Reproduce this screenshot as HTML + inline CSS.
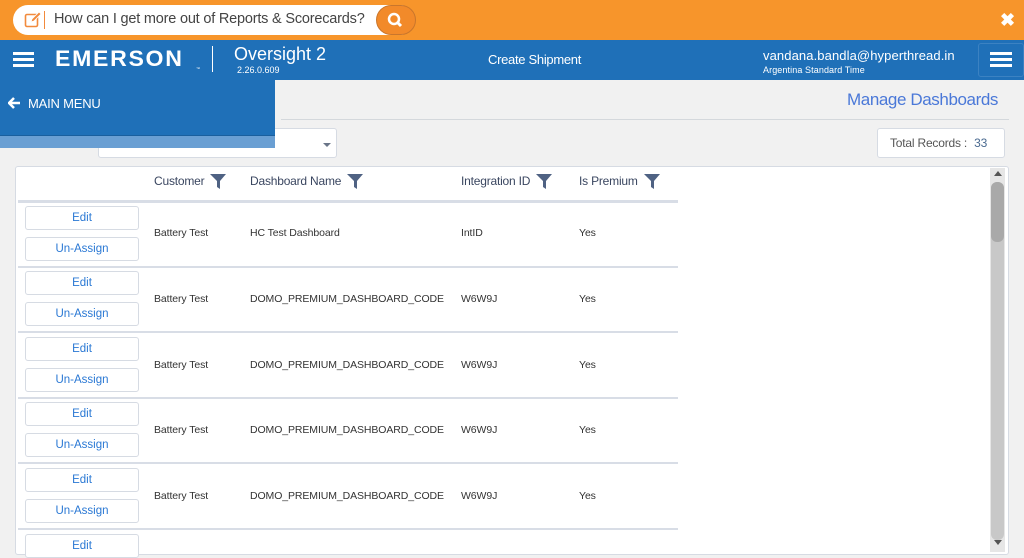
<!DOCTYPE html><html><head><style>
*{box-sizing:border-box;margin:0;padding:0}
body{width:1024px;height:555px;overflow:hidden;background:#f1f1f1;font-family:"Liberation Sans",sans-serif;position:relative}
.abs{position:absolute;white-space:nowrap}
.btn{position:absolute;left:25px;width:114px;height:24px;border:1px solid #d6dbe3;border-radius:3px;background:#fff;color:#2a78d4;font-size:11.5px;text-align:center;line-height:22px}
.cell{position:absolute;font-size:10.5px;color:#333;letter-spacing:-0.1px;white-space:nowrap}
.hd{position:absolute;top:174px;font-size:12px;color:#3a4660;letter-spacing:-0.2px;white-space:nowrap}
.hd svg{vertical-align:middle;margin-left:6px;position:relative;top:-1px}
.line{position:absolute;left:18px;width:660px;height:2px;background:#d8dde6}
</style></head><body>
<div class="abs" style="left:0;top:0;width:1024px;height:40px;background:#f7952b"></div>
<div class="abs" style="left:13px;top:5px;width:402px;height:30px;border-radius:15px;background:#fff"></div>
<svg class="abs" style="left:24px;top:11px" width="18" height="18"><rect x="1.5" y="3.5" width="12" height="12" rx="1.5" fill="none" stroke="#f28a3c" stroke-width="1.6"/><path d="M7 11 L8 8 L15 1 L17 3 L10 10 Z" fill="#f28a3c" stroke="#fff" stroke-width="0.8"/></svg>
<div class="abs" style="left:44px;top:11px;width:1px;height:18px;background:#f28a3c"></div>
<div class="abs" style="left:54px;top:11px;font-size:14.5px;color:#444;letter-spacing:-0.2px">How can I get more out of Reports &amp; Scorecards?</div>
<div class="abs" style="left:376px;top:5px;width:40px;height:30px;border-radius:15px;background:#f28a2a;border:1px solid #c9762c"></div>
<svg class="abs" style="left:386px;top:11px" width="18" height="18"><circle cx="8" cy="8" r="5" stroke="#fff" stroke-width="2.5" fill="none"/><line x1="11.5" y1="11.5" x2="15" y2="15" stroke="#fff" stroke-width="3"/></svg>
<div class="abs" style="left:1000px;top:10px;color:#fff;font-size:18px;font-weight:bold">✖</div>
<div class="abs" style="left:0;top:40px;width:1024px;height:40px;background:#1f70b8"></div>
<div class="abs" style="left:13px;top:52px;width:21px;height:3px;background:#fff;box-shadow:0 6px 0 #fff,0 12px 0 #fff"></div>
<div class="abs" style="left:55px;top:46px;color:#fff;font-size:22px;font-weight:bold;letter-spacing:1.6px;transform:scaleX(1.05);transform-origin:left">EMERSON</div>
<div class="abs" style="left:196px;top:66px;color:#fff;font-size:4px">™</div>
<div class="abs" style="left:212px;top:46px;width:1px;height:26px;background:#fff"></div>
<div class="abs" style="left:234px;top:44px;color:#fff;font-size:18px">Oversight 2</div>
<div class="abs" style="left:237px;top:65px;color:#fff;font-size:9px">2.26.0.609</div>
<div class="abs" style="left:488px;top:52px;color:#fff;font-size:13px;letter-spacing:-0.3px">Create Shipment</div>
<div class="abs" style="left:763px;top:48px;color:#fff;font-size:13px;letter-spacing:0.1px">vandana.bandla@hyperthread.in</div>
<div class="abs" style="left:763px;top:65px;color:#fff;font-size:9px;letter-spacing:0.1px">Argentina Standard Time</div>
<div class="abs" style="left:978px;top:43px;width:46px;height:34px;border:1px solid #3b82c2;border-radius:3px"></div>
<div class="abs" style="left:990px;top:52px;width:22px;height:3px;background:#fff;box-shadow:0 6px 0 #fff,0 12px 0 #fff"></div>
<div class="abs" style="left:281px;top:119px;width:728px;height:1px;background:#d4d8dc"></div>
<div class="abs" style="left:847px;top:90px;color:#4a78d8;font-size:17px;letter-spacing:-0.4px">Manage Dashboards</div>
<div class="abs" style="left:98px;top:128px;width:239px;height:30px;background:#fff;border:1px solid #d6dbe3;border-radius:3px"></div>
<div class="abs" style="left:323px;top:143px;border-left:4px solid transparent;border-right:4px solid transparent;border-top:4px solid #6a7588"></div>
<div class="abs" style="left:0;top:80px;width:275px;height:56px;background:#1f70b8;border-bottom:1px solid #1a5f9e"></div>
<div class="abs" style="left:0;top:136px;width:275px;height:12px;background:#6a9fd3"></div>
<svg class="abs" style="left:8px;top:97px" width="13" height="12"><path d="M6 1 L1 6 L6 11 M1 6 L12 6" stroke="#fff" stroke-width="2.5" fill="none"/></svg>
<div class="abs" style="left:28px;top:96px;color:#fff;font-size:13px;letter-spacing:-0.2px">MAIN MENU</div>
<div class="abs" style="left:877px;top:128px;width:128px;height:30px;background:#fff;border:1px solid #d6dbe3;border-radius:3px;font-size:12px;color:#555;line-height:28px;padding-left:12px;letter-spacing:-0.2px">Total Records : <span style="margin-left:4px;color:#4a6a90">33</span></div>
<div class="abs" style="left:15px;top:166px;width:994px;height:389px;background:#fff;border:1px solid #d6dbe3;border-radius:3px"></div>
<div class="abs" style="left:990px;top:168px;width:15px;height:384px;background:#e6e6e6"></div>
<div class="abs" style="left:991px;top:182px;width:13px;height:358px;background:#c8c8c8;border-radius:6px"></div>
<div class="abs" style="left:991px;top:182px;width:13px;height:60px;background:#a9a9a9;border-radius:6px"></div>
<div class="abs" style="left:994px;top:171px;border-left:4px solid transparent;border-right:4px solid transparent;border-bottom:5px solid #555"></div>
<div class="abs" style="left:994px;top:540px;border-left:4px solid transparent;border-right:4px solid transparent;border-top:5px solid #555"></div>
<div class="hd" style="left:154px">Customer<svg width="16" height="16"><path d="M0 1 H16 L10 8 V16 L7 14 V8 Z" fill="#4f6283"/></svg></div>
<div class="hd" style="left:250px">Dashboard Name<svg width="16" height="16"><path d="M0 1 H16 L10 8 V16 L7 14 V8 Z" fill="#4f6283"/></svg></div>
<div class="hd" style="left:461px">Integration ID<svg width="16" height="16"><path d="M0 1 H16 L10 8 V16 L7 14 V8 Z" fill="#4f6283"/></svg></div>
<div class="hd" style="left:579px">Is Premium<svg width="16" height="16"><path d="M0 1 H16 L10 8 V16 L7 14 V8 Z" fill="#4f6283"/></svg></div>
<div class="line" style="top:200px;height:3px"></div>
<div class="btn" style="top:206px">Edit</div><div class="btn" style="top:237px">Un-Assign</div>
<div class="cell" style="left:154px;top:227px">Battery Test</div><div class="cell" style="left:250px;top:227px">HC Test Dashboard</div><div class="cell" style="left:461px;top:227px">IntID</div><div class="cell" style="left:579px;top:227px">Yes</div>
<div class="line" style="top:266px"></div>
<div class="btn" style="top:271px">Edit</div><div class="btn" style="top:302px">Un-Assign</div>
<div class="cell" style="left:154px;top:293px">Battery Test</div><div class="cell" style="left:250px;top:293px">DOMO_PREMIUM_DASHBOARD_CODE</div><div class="cell" style="left:461px;top:293px">W6W9J</div><div class="cell" style="left:579px;top:293px">Yes</div>
<div class="line" style="top:331px"></div>
<div class="btn" style="top:337px">Edit</div><div class="btn" style="top:368px">Un-Assign</div>
<div class="cell" style="left:154px;top:359px">Battery Test</div><div class="cell" style="left:250px;top:359px">DOMO_PREMIUM_DASHBOARD_CODE</div><div class="cell" style="left:461px;top:359px">W6W9J</div><div class="cell" style="left:579px;top:359px">Yes</div>
<div class="line" style="top:397px"></div>
<div class="btn" style="top:402px">Edit</div><div class="btn" style="top:433px">Un-Assign</div>
<div class="cell" style="left:154px;top:424px">Battery Test</div><div class="cell" style="left:250px;top:424px">DOMO_PREMIUM_DASHBOARD_CODE</div><div class="cell" style="left:461px;top:424px">W6W9J</div><div class="cell" style="left:579px;top:424px">Yes</div>
<div class="line" style="top:462px"></div>
<div class="btn" style="top:468px">Edit</div><div class="btn" style="top:499px">Un-Assign</div>
<div class="cell" style="left:154px;top:490px">Battery Test</div><div class="cell" style="left:250px;top:490px">DOMO_PREMIUM_DASHBOARD_CODE</div><div class="cell" style="left:461px;top:490px">W6W9J</div><div class="cell" style="left:579px;top:490px">Yes</div>
<div class="line" style="top:528px"></div>
<div class="btn" style="top:534px">Edit</div>
</body></html>
